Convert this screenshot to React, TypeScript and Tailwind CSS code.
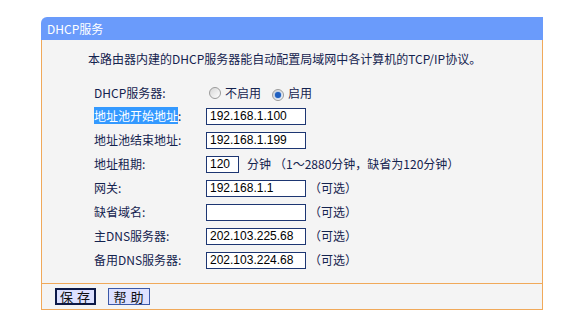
const FONT = "font-['Noto_Sans_CJK_SC','Noto_Sans',sans-serif]";

const ROWS = [
  { label: "地址池结束地址:", value: "192.168.1.199" },
];

function Radio({ checked }: { checked?: boolean }) {
  return (
    <span className="inline-flex w-[12px] h-[12px] rounded-full border border-[#9a9a9a] bg-gradient-to-br from-[#d6d6d6] to-white items-center justify-center">
      {checked && <span className="w-[6px] h-[6px] rounded-full bg-[#1f5fbf] shadow-[0_0_2px_#3d86e8]" />}
    </span>
  );
}

function Field({ value, width = "w-[100px]" }: { value: string; width?: string }) {
  return (
    <div className={`${width} h-[17px] border border-[#1d3672] bg-white pl-[3px] text-[12px] leading-[15px] text-black font-['Liberation_Sans',sans-serif]`}>
      {value}
    </div>
  );
}

function Row({ label, children }: { label: React.ReactNode; children: React.ReactNode }) {
  return (
    <div className="flex items-center h-[24px]">
      <div className="w-[112px]">{label}</div>
      <div className="flex items-center">{children}</div>
    </div>
  );
}

function Optional() {
  return <span className="ml-[3px]">（可选）</span>;
}

export default function App() {
  return (
    <div className={`w-[571px] h-[326px] bg-white pt-[17px] pl-[41px] ${FONT} text-[12px] text-[#14234f]`}>
      <div className="w-[502px]">
        <div className="h-[23px] bg-[#6a9bfb] rounded-tl-[6px] pl-[6px] leading-[23px] text-white text-[12px]">
          DHCP服务
        </div>
        <div className="border-x border-[#f0a95a] bg-[#f4f4f4] pt-[11px] pb-[11px]">
          <p className="pl-[46px] leading-[16px] text-[12px]">
            本路由器内建的DHCP服务器能自动配置局域网中各计算机的TCP/IP协议。
          </p>
          <div className="pl-[52px] mt-[14px] leading-[16px]">
            <div className="flex items-center h-[23px]">
              <div className="w-[115px]">DHCP服务器:</div>
              <div className="flex items-center">
                <Radio />
                <span className="ml-[4px]">不启用</span>
                <span className="ml-[11px]"><Radio checked /></span>
                <span className="ml-[4px]">启用</span>
              </div>
            </div>
            <Row label={<span><span className="bg-[#3399ff] text-white">地址池开始地址</span>:</span>}>
              <Field value="192.168.1.100" />
            </Row>
            {ROWS.map((r) => (
              <Row key={r.label} label={r.label}>
                <Field value={r.value} />
              </Row>
            ))}
            <Row label="地址租期:">
              <Field value="120" width="w-[33px]" />
              <span className="ml-[8px]">分钟</span>
              <span className="ml-[3px]">（1～2880分钟，缺省为120分钟）</span>
            </Row>
            <Row label="网关:">
              <Field value="192.168.1.1" />
              <Optional />
            </Row>
            <Row label="缺省域名:">
              <Field value="" />
              <Optional />
            </Row>
            <Row label="主DNS服务器:">
              <Field value="202.103.225.68" />
              <Optional />
            </Row>
            <Row label="备用DNS服务器:">
              <Field value="202.103.224.68" />
              <Optional />
            </Row>
          </div>
        </div>
        <div className="h-[27px] border border-[#f0a95a] bg-[#f4f4f4] flex items-center pl-[13px] gap-[12px]">
          <button className="w-[41px] h-[17px] border-2 border-[#0d1a48] bg-[#dde1ff] text-[13px] leading-[13px] text-[#111] tracking-[4px] pl-[3px]">
            保存
          </button>
          <button className="w-[42px] h-[17px] border border-[#3a58a8] bg-[#dde1ff] text-[13px] leading-[15px] text-[#111] tracking-[4px] pl-[3px]">
            帮助
          </button>
        </div>
      </div>
    </div>
  );
}
